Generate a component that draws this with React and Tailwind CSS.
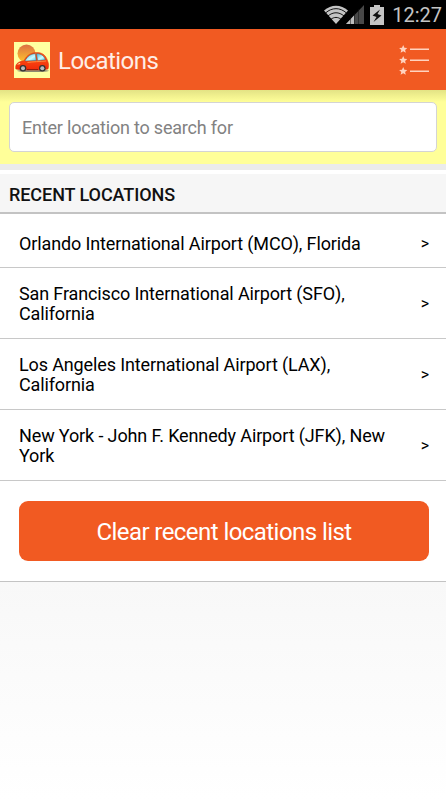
import React from 'react';

const locations = [
  'Orlando International Airport (MCO), Florida',
  'San Francisco International Airport (SFO), California',
  'Los Angeles International Airport (LAX), California',
  'New York - John F. Kennedy Airport (JFK), New York',
];

const StatusBar = () => (
  <div className="flex h-[29px] items-center justify-end bg-black pr-[4px]">
    <svg width="24" height="20" viewBox="0 0 24 20" className="mt-px">
      <path d="M0 5.5C7-0.8 17-0.8 24 5.5L12 19Z" fill="#c4c4c4" />
      <path d="M1.5 8C8 2.2 16 2.2 22.5 8M4 11C9 6.7 15 6.7 20 11M7 14.3C10 11.8 14 11.8 17 14.3" fill="none" stroke="#000" strokeWidth="0.9" />
    </svg>
    <svg width="18" height="19" viewBox="0 0 18 19" className="ml-[-2px]">
      <path d="M0 19L18 0V19Z" fill="#484848" />
      <path d="M0 19L8 10.5V19Z" fill="#bdbdbd" />
      <path d="M4.5 12V19M8.5 8V19M12.5 4V19" stroke="#111" strokeWidth="0.5" />
    </svg>
    <svg width="14" height="20" viewBox="0 0 14 20" className="ml-[6px]">
      <path d="M4 0H10V2H14V20H0V2H4Z" fill="#c4c4c4" />
      <path d="M10 4.5L2.5 10.5L6.5 12L3.5 17L11.5 10.5L7.5 9Z" fill="#111" />
    </svg>
    <span className="ml-[8px] text-[20px] leading-none text-[#c4c4c4]">12:27</span>
  </div>
);

const CarLogo = () => (
  <svg width="36" height="36" viewBox="0 0 36 36">
    <defs>
      <linearGradient id="sun" x1="0" y1="0" x2="0" y2="1">
        <stop offset="0" stopColor="#dc7044" />
        <stop offset="1" stopColor="#ffc52e" />
      </linearGradient>
      <linearGradient id="glass" x1="0" y1="0" x2="1" y2="1">
        <stop offset="0" stopColor="#4fb9e2" />
        <stop offset="0.6" stopColor="#c9fbff" />
        <stop offset="1" stopColor="#4cc4e8" />
      </linearGradient>
      <linearGradient id="paint" x1="0" y1="0" x2="0" y2="1">
        <stop offset="0" stopColor="#ff5a1a" />
        <stop offset="1" stopColor="#f02a08" />
      </linearGradient>
    </defs>
    <rect width="36" height="36" fill="#ffffa0" />
    <circle cx="12.5" cy="11.5" r="9" fill="url(#sun)" />
    <ellipse cx="19" cy="28.8" rx="16" ry="1.2" fill="#8d8a70" />
    <path d="M1.8 27C1 22.5 3.5 19.5 10 18.8C13 12.5 18 10.2 24 10.6C30 11 32.5 15 34 20C35 22.5 34.7 25 34 27L29 28H7Z" fill="url(#paint)" stroke="#d93212" strokeWidth="0.5" />
    <path d="M11 18.9C13.5 14 17 11.9 21.2 11.7L22.2 18.4Z" fill="url(#glass)" stroke="#285a6b" strokeWidth="0.4" />
    <path d="M22.6 11.7C27.5 11.7 30 14 31.3 17.8L23.6 18.4Z" fill="url(#glass)" stroke="#285a6b" strokeWidth="0.4" />
    <path d="M13.5 20.5C19 19.5 26 19.7 32 19" stroke="#ff9b49" strokeWidth="0.8" fill="none" />
    <path d="M3 22.8L5.5 20.8L6.5 22Z" fill="#ffe6a3" />
    <path d="M13 27.5H24" stroke="#7d170b" strokeWidth="0.8" />
    <circle cx="9" cy="26.3" r="3.3" fill="#333" />
    <circle cx="9" cy="26.3" r="2" fill="#b6bcbf" />
    <circle cx="28.3" cy="26.3" r="3.3" fill="#333" />
    <circle cx="28.3" cy="26.3" r="2" fill="#b6bcbf" />
  </svg>
);

const ListIcon = () => (
  <svg width="31" height="30" viewBox="0 0 31 30" fill="#ffd3bf">
    {[0, 11, 22].map((y) => (
      <g key={y} transform={`translate(0 ${y})`}>
        <path d="M4.2 0L5.4 2.7L8.3 3L6.1 4.9L6.8 7.8L4.2 6.3L1.6 7.8L2.3 4.9L0.1 3L3 2.7Z" />
        <rect x="11" y="3.5" width="19" height="1.5" />
      </g>
    ))}
  </svg>
);

const App = () => {
  return (
    <div className="h-[800px] w-[446px] overflow-hidden bg-white font-[Roboto,sans-serif] text-black">
      <StatusBar />

      <header className="flex h-[61px] items-center bg-[#f15a22] pr-4 pl-[14px]">
        <CarLogo />
        <h1 className="ml-2 flex-1 pt-[2px] text-[24px] leading-7 tracking-[-0.55px] text-[#ffeee7]">Locations</h1>
        <ListIcon />
      </header>

      <div className="h-[74px] bg-[#ffff99] bg-linear-to-b from-[#e3e385] to-[#ffff99] to-[12px] px-[9px] pt-[12px]">
        <input
          type="text"
          placeholder="Enter location to search for"
          className="block h-[50px] w-full rounded-[5px] border border-[#d4d4d4] bg-white px-3 text-[18px] tracking-[-0.2px] placeholder:text-[#828282]"
        />
      </div>
      <div className="h-[6px] bg-[#ebebeb]" />

      <h2 className="mt-1 flex h-10 items-center border-b-2 border-[#c3c3c3] bg-[#f6f6f6] pt-[2px] pl-[9px] text-[18px] font-medium tracking-[-0.07px] text-[#111]">
        RECENT LOCATIONS
      </h2>

      <ul>
        {locations.map((name) => (
          <li
            key={name}
            className="flex h-[71px] items-center justify-between border-b border-[#c8c8c8] pt-px pr-[17px] pl-[19px] text-[18px] leading-5 tracking-[-0.13px] first:h-[54px] first:pt-[6px]"
          >
            <span className="w-[375px]">{name}</span>
            <span className="text-[16px]">&gt;</span>
          </li>
        ))}
      </ul>

      <div className="h-[101px] border-b border-[#c3c3c3] pt-[20px] pr-[17px] pl-[19px]">
        <button className="block h-[60px] w-full rounded-[9px] bg-[#f15a22] pt-[2px] text-[24px] tracking-[-0.56px] text-white">
          Clear recent locations list
        </button>
      </div>

      <div className="h-[218px] bg-linear-to-b from-[#f8f8f8] to-white" />
    </div>
  );
};

export default App;
